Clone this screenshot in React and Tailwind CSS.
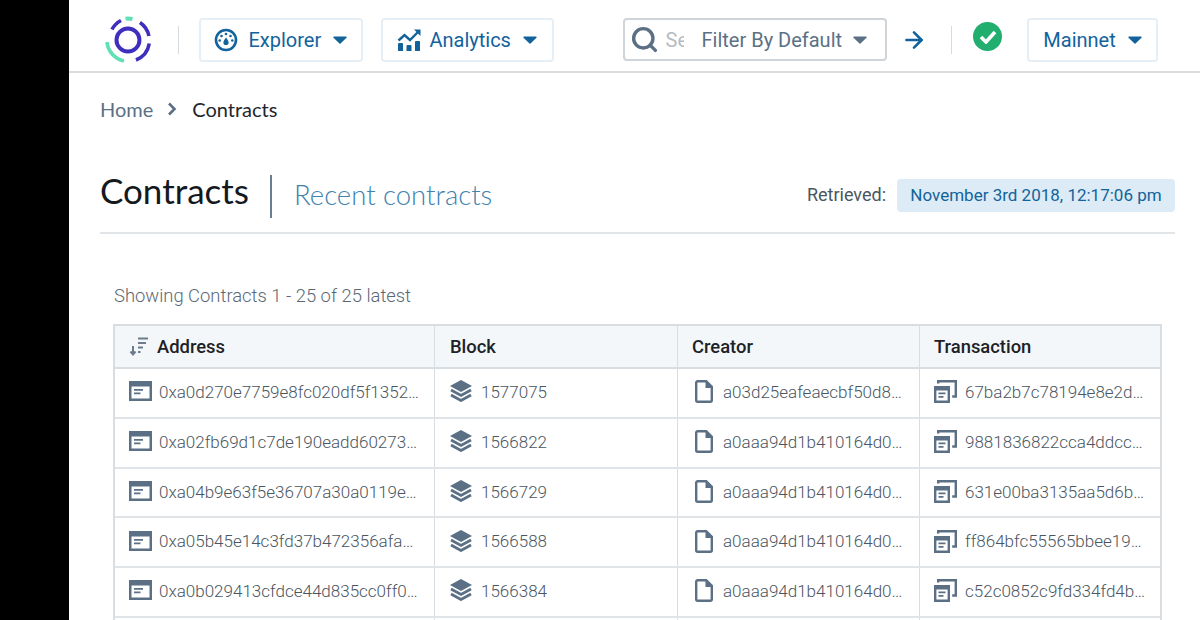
import { ArrowRight, Search } from 'lucide-react'

const ROWS = [
  { address: '0xa0d270e7759e8fc020df5f1352…', block: '1577075', creator: 'a03d25eafeaecbf50d8…', tx: '67ba2b7c78194e8e2d…' },
  { address: '0xa02fb69d1c7de190eadd60273…', block: '1566822', creator: 'a0aaa94d1b410164d0…', tx: '9881836822cca4ddcc…' },
  { address: '0xa04b9e63f5e36707a30a0119e…', block: '1566729', creator: 'a0aaa94d1b410164d0…', tx: '631e00ba3135aa5d6b…' },
  { address: '0xa05b45e14c3fd37b472356afa…', block: '1566588', creator: 'a0aaa94d1b410164d0…', tx: 'ff864bfc55565bbee19…' },
  { address: '0xa0b029413cfdce44d835cc0ff0…', block: '1566384', creator: 'a0aaa94d1b410164d0…', tx: 'c52c0852c9fd334fd4b…' },
]

function Logo() {
  return (
    <svg width="50" height="50" viewBox="0 0 50 50" fill="none" strokeWidth="3.6" strokeLinecap="butt">
      <circle cx="25" cy="25" r="11.5" stroke="#3f2fbf" strokeWidth="4" />
      <path d="M9 14.5A21 21 0 0 1 18 5.5" stroke="#3f2fbf" />
      <path d="M22.5 3.6A21.5 21.5 0 0 1 29.5 4" stroke="#5fe0b7" strokeWidth="4" />
      <path d="M37 7.5A21.5 21.5 0 0 1 46 21" stroke="#3f2fbf" />
      <path d="M46.3 28.5A21.5 21.5 0 0 1 33 45" stroke="#3f2fbf" />
      <path d="M4 27A21.5 21.5 0 0 0 21 46" stroke="#5fe0b7" />
    </svg>
  )
}

function Caret({ className = 'text-[#12639c]' }) {
  return (
    <svg className={className} width="14" height="8" viewBox="0 0 14 8">
      <path d="M1 0.5h12a.7.7 0 0 1 .5 1.2L7.5 7.5a.7.7 0 0 1-1 0L.5 1.7A.7.7 0 0 1 1 .5z" fill="currentColor" />
    </svg>
  )
}

function GaugeIcon() {
  return (
    <svg width="24" height="24" viewBox="0 0 24 24" className="text-[#12639c]">
      <circle cx="12" cy="12" r="10" fill="none" stroke="currentColor" strokeWidth="2.6" />
      <path d="M12 9.5c1.6 2.2 2.6 3.6 2.6 4.9a2.6 2.6 0 0 1-5.2 0c0-1.3 1-2.7 2.6-4.9z" fill="currentColor" />
      <circle cx="12" cy="6" r="1.3" fill="currentColor" />
      <circle cx="7.5" cy="8" r="1.3" fill="currentColor" />
      <circle cx="16.5" cy="8" r="1.3" fill="currentColor" />
      <circle cx="5.7" cy="12.5" r="1.3" fill="currentColor" />
      <circle cx="18.3" cy="12.5" r="1.3" fill="currentColor" />
    </svg>
  )
}

function ChartIcon() {
  return (
    <svg width="24" height="24" viewBox="0 0 24 24" className="text-[#12639c]">
      <path d="M1 23v-7a1 1 0 0 1 1-1h3a1 1 0 0 1 1 1v7zM9.5 23v-5a1 1 0 0 1 1-1h3a1 1 0 0 1 1 1v5zM18 23v-9a1 1 0 0 1 1-1h3a1 1 0 0 1 1 1v9z" fill="currentColor" />
      <path d="M1.5 12.5L7.5 7l5.5 5L21 4" fill="none" stroke="currentColor" strokeWidth="2.4" />
      <path d="M17 1.5h6.5V8z" fill="currentColor" />
    </svg>
  )
}

function SortIcon() {
  return (
    <svg width="20" height="20" viewBox="0 0 20 20" className="text-[#6b7c8c]">
      <path d="M4 9v8M1.5 14.5L4 17.5l2.5-3" fill="none" stroke="currentColor" strokeWidth="2" />
      <path d="M9 1.5h10M9 6h8M9 10.5h5M9 15h2.5" fill="none" stroke="currentColor" strokeWidth="2" />
    </svg>
  )
}

function AddressIcon() {
  return (
    <svg width="23" height="20" viewBox="0 0 23 20" className="text-[#5b7085] shrink-0 mb-[3px]">
      <path d="M0 0h23v20H0zM2.5 5.5v12h18v-12zM5 8h9v1.8H5zM5 11.5h6.5v1.8H5z" fill="currentColor" fillRule="evenodd" />
    </svg>
  )
}

function BlockIcon() {
  return (
    <svg width="24" height="22" viewBox="0 0 24 22" className="text-[#5b7085] shrink-0 mb-[3px]">
      <path d="M12 0l11 6-11 6L1 6z" fill="currentColor" />
      <path d="M2 10l10 5.5L22 10M2 15l10 5.5L22 15" fill="none" stroke="currentColor" strokeWidth="2.8" />
    </svg>
  )
}

function FileIcon() {
  return (
    <svg width="18" height="23" viewBox="0 0 18 23" className="text-[#5b7085] shrink-0 mb-[2px]">
      <path d="M2.5 1.2h8.7L16.8 6.8V20.3a1.5 1.5 0 0 1-1.5 1.5H2.7a1.5 1.5 0 0 1-1.5-1.5V2.5A1.5 1.5 0 0 1 2.5 1.2z" fill="none" stroke="currentColor" strokeWidth="2.4" />
      <path d="M10.5 1v7h7z" fill="currentColor" />
    </svg>
  )
}

function TxIcon() {
  return (
    <svg width="23" height="23" viewBox="0 0 23 23" className="text-[#5b7085] shrink-0 mb-[2px]">
      <path d="M0 6h16v17H0zM2.4 10.5v10h11.2v-10zM4.5 12.5h7v1.7h-7zM4.5 16h5v1.7h-5z" fill="currentColor" fillRule="evenodd" />
      <path d="M4.2 3.6V1.2h17.6v15.3h-3.6" fill="none" stroke="currentColor" strokeWidth="2.4" />
    </svg>
  )
}

function NavButton({ children, width }) {
  return (
    <button className={`${width} h-[44px] flex items-center justify-center gap-[10px] rounded border-2 border-[#e6eff5] text-[#12639c] text-[20px]`}>
      {children}
    </button>
  )
}

const CELL = 'flex items-center gap-[8px] px-[14px] border-r border-[#d8dde2] last:border-r-0 min-w-0'
const COLS = 'grid grid-cols-[320px_243px_242px_1fr]'

export default function App() {
  return (
    <div className="flex h-[620px] overflow-hidden bg-black [font-family:Roboto,sans-serif]">
      <div className="w-[69px] shrink-0" />
      <div className="flex-1 min-w-0 bg-white">
        <header className="h-[73px] flex items-center border-b-2 border-[#d9dde0] pt-[8px] pl-[34px] pr-[42px]">
          <Logo />
          <div className="w-px h-[28px] bg-[#d5dade] ml-[25px] mr-[20px]" />
          <NavButton width="w-[164px]"><GaugeIcon />Explorer<span className="ml-[2px]"><Caret /></span></NavButton>
          <div className="w-[18px]" />
          <NavButton width="w-[173px]"><ChartIcon /><span className="-ml-[2px]">Analytics</span><span className="ml-[2px]"><Caret /></span></NavButton>
          <div className="w-[69px]" />
          <div className="w-[265px] h-[43px] flex items-center rounded border-2 border-[#cfd4d8] pl-[5px] text-[20px]">
            <Search size={29} strokeWidth={2.8} className="text-[#5b7085] shrink-0" />
            <span className="w-[18px] ml-[7px] overflow-hidden text-[#b5bcc3]">Se</span>
            <span className="text-[#5b7085] ml-[18px]">Filter By Default</span>
            <span className="ml-[11px]"><Caret className="text-[#5b7085]" /></span>
          </div>
          <ArrowRight size={26} strokeWidth={2.4} className="text-[#12639c] ml-[14px]" />
          <div className="w-px h-[28px] bg-[#d5dade] ml-[24px]" />
          <div className="ml-[21px] mb-[6px] w-[29px] h-[29px] rounded-full bg-[#21ae6e] flex items-center justify-center">
            <svg width="18" height="14" viewBox="0 0 18 14">
              <path d="M2 7l5 5 9-10" fill="none" stroke="white" strokeWidth="3.6" />
            </svg>
          </div>
          <div className="w-[25px]" />
          <NavButton width="w-[131px]">Mainnet<span className="ml-[2px]"><Caret /></span></NavButton>
        </header>

        <main className="pl-[31px] pr-[25px]">
          <nav className="h-[72px] flex items-center gap-[14px] text-[20px] [font-family:Lato,sans-serif]">
            <span className="text-[#5b7085]">Home</span>
            <svg width="10" height="14" viewBox="0 0 10 14"><path d="M2 1.5L7.5 7 2 12.5" fill="none" stroke="#5b7085" strokeWidth="2.6" /></svg>
            <span className="text-[#1f262c] ml-[1px]">Contracts</span>
          </nav>

          <div className="h-[89px] flex items-center border-b-2 border-[#e2e5e8] pt-[16px] [font-family:Lato,sans-serif]">
            <h1 className="text-[35px] text-[#14191e] mb-[12px]">Contracts</h1>
            <div className="w-[2px] h-[43px] bg-[#6b7f92] ml-[21px] mr-[22px]" />
            <span className="text-[27.5px] font-light text-[#3f82ad] mb-[4px]">Recent contracts</span>
            <span className="ml-auto mr-[11px] mb-[4px] text-[18px] text-[#4a5661] [font-family:Roboto,sans-serif]">Retrieved:</span>
            <span className="h-[33px] w-[278px] mb-[2px] flex items-center justify-center rounded bg-[#dcebf5] text-[#12639c] text-[17px] [font-family:Roboto,sans-serif]">
              November 3rd 2018, 12:17:06 pm
            </span>
          </div>

          <p className="ml-[14px] mt-[50px] mb-[16px] text-[18.4px] leading-[24px] font-light text-[#5b6873]">Showing Contracts 1 - 25 of 25 latest</p>

          <div className="ml-[13px] w-[1049px] border-2 border-[#d8dde2]">
            <div className={`${COLS} h-[43px] bg-[#f4f7f9] border-b-2 border-[#d8dde2] text-[18.4px] font-medium text-[#1c2227]`}>
              <div className={CELL}><SortIcon />Address</div>
              <div className={`${CELL} !pl-[15px]`}>Block</div>
              <div className={CELL}>Creator</div>
              <div className={CELL}>Transaction</div>
            </div>
            {ROWS.map(row => (
              <div key={row.address} className={`${COLS} h-[49.75px] border-b-2 border-[#e1e4e7] text-[17px] font-light text-[#4a5661]`}>
                <div className={`${CELL} !gap-[7px]`}><AddressIcon /><span className="whitespace-nowrap">{row.address}</span></div>
                <div className={CELL}><BlockIcon /><span>{row.block}</span></div>
                <div className={`${CELL} !gap-[10px] !pl-[17px]`}><FileIcon /><span className="whitespace-nowrap">{row.creator}</span></div>
                <div className={CELL}><TxIcon /><span className="whitespace-nowrap">{row.tx}</span></div>
              </div>
            ))}
            {/* the next row starts right at the bottom edge of the window */}
            <div className={`${COLS} h-[50px]`}>
              <div className={CELL} />
              <div className={CELL} />
              <div className={CELL} />
              <div className={CELL} />
            </div>
          </div>
        </main>
      </div>
    </div>
  )
}
